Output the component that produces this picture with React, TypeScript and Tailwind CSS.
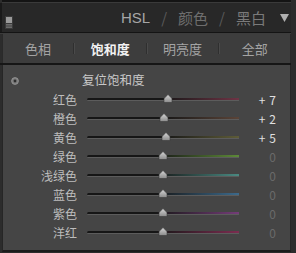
import React from 'react';

const rows = [
  { label: '红色', value: '+7', pos: 168, track: 'bg-[linear-gradient(to_right,#161616_50%,#6e3445)]', bright: true },
  { label: '橙色', value: '+2', pos: 164, track: 'bg-[linear-gradient(to_right,#161616_50%,#5a4438)]', bright: true },
  { label: '黄色', value: '+5', pos: 166, track: 'bg-[linear-gradient(to_right,#161616_50%,#5e5c38)]', bright: true },
  { label: '绿色', value: '0', pos: 163, track: 'bg-[linear-gradient(to_right,#161616_45%,#5d8a38)]', bright: false },
  { label: '浅绿色', value: '0', pos: 163, track: 'bg-[linear-gradient(to_right,#161616_45%,#4a8a82)]', bright: false },
  { label: '蓝色', value: '0', pos: 163, track: 'bg-[linear-gradient(to_right,#161616_45%,#3c6a8c)]', bright: false },
  { label: '紫色', value: '0', pos: 163, track: 'bg-[linear-gradient(to_right,#161616_45%,#743c78)]', bright: false },
  { label: '洋红', value: '0', pos: 163, track: 'bg-[linear-gradient(to_right,#161616_45%,#7c2c50)]', bright: false },
];

const tabs = ['色相', '饱和度', '明亮度', '全部'];

const Thumb: React.FC<{ left: number }> = ({ left }) => (
  <svg
    width="10"
    height="9"
    viewBox="0 0 10 9"
    className="absolute top-[-4px]"
    style={{ left: left - 87 - 5 }}
  >
    <defs>
      <linearGradient id="th" x1="0" y1="0" x2="0" y2="1">
        <stop offset="0" stopColor="#d6d6d6" />
        <stop offset="1" stopColor="#8a8a8a" />
      </linearGradient>
    </defs>
    <path d="M5 0.5 L9 4.5 L9 8.5 L1 8.5 L1 4.5 Z" fill="url(#th)" stroke="#3a3a3a" strokeWidth="0.6" />
  </svg>
);

const App: React.FC = () => {
  return (
    <div
      className="w-[296px] h-[253px] bg-[#2c2c2c] flex flex-col overflow-hidden"
      style={{ fontFamily: '"Noto Sans CJK SC", "Liberation Sans", sans-serif' }}
    >
      {/* top strip */}
      <div className="h-[3px] bg-[#141414] border-b border-[#3a3a3a] mx-[2px] mr-[5px]" />

      {/* header */}
      <div className="h-[29px] bg-[#282828] flex items-center pl-[3px] pr-[2px] mr-[5px] border-l-2 border-[#1a1a1a]">
        <svg width="8" height="13" viewBox="0 0 8 13" className="mt-[10px]">
          <rect x="0" y="0" width="8" height="13" fill="#3a3a3a" />
          <rect x="1" y="1" width="6" height="6" fill="#9a9a9a" />
          <rect x="1" y="8" width="6" height="4" fill="#6a6a6a" />
          <line x1="1" y1="10" x2="7" y2="10" stroke="#444" />
        </svg>
        <div className="flex-1" />
        <div className="flex items-center text-[15px] leading-none">
          <span className="text-[#a6a6a6] font-['Liberation_Sans']">HSL</span>
          <span className="text-[#5a5a5a] mx-[11px]">/</span>
          <span className="text-[#6e6e6e]">颜色</span>
          <span className="text-[#5a5a5a] mx-[11px]">/</span>
          <span className="text-[#7a7a7a]">黑白</span>
          <svg width="9" height="8" viewBox="0 0 9 8" className="ml-[14px]">
            <path d="M0 0 L9 0 L4.5 8 Z" fill="#b0b0b0" />
          </svg>
        </div>
      </div>

      {/* divider */}
      <div className="h-[2px] bg-[#141414] border-b border-[#3c3c3c] mr-[5px]" />

      {/* tabs */}
      <div className="h-[29px] bg-[#3d3d3d] flex items-center mx-[2px] mr-[5px] border-x border-[#2a2a2a] text-[13px]">
        {tabs.map((t, i) => (
          <React.Fragment key={t}>
            {i > 0 && <div className="w-[2px] h-[11px] bg-[#2f2f2f] border-r border-[#4a4a4a]" />}
            <div className={`flex-1 text-center ${i === 1 ? 'text-[#f2f2f2] font-bold' : 'text-[#a4a4a4]'}`}>{t}</div>
          </React.Fragment>
        ))}
      </div>

      <div className="h-[2px] bg-[#161616] mr-[5px]" />

      {/* panel */}
      <div className="flex-1 bg-[#454545] mx-[2px] mr-[5px] border-x border-[#262626] border-b-2 border-b-[#1c1c1c] pt-[6px] relative">
        <div className="h-[19px] flex items-center">
          <div className="w-[74px] pl-[8px]">
            <svg width="8" height="8" viewBox="0 0 8 8">
              <circle cx="4" cy="4" r="3.4" fill="#7a7a7a" stroke="#9a9a9a" strokeWidth="0.8" />
              <circle cx="4" cy="4" r="1.4" fill="#2e2e2e" />
            </svg>
          </div>
          <span className="ml-[5px] text-[12.5px] text-[#c8c8c8] leading-none">复位饱和度</span>
        </div>
        {rows.map((r) => (
          <div key={r.label} className="h-[19px] flex items-center">
            <div className="w-[74px] text-right text-[12px] text-[#bdbdbd] leading-none">{r.label}</div>
            <div className="ml-[10px] w-[152px] h-[4px] relative">
              <div className={`h-[3px] rounded-l-full border-b border-[#5c5c5c] ${r.track}`} />
              <Thumb left={r.pos} />
            </div>
            <div
              className={`w-[37px] text-right text-[12px] leading-none ${r.bright ? 'text-[#e0e0e0]' : 'text-[#6a6a6a]'}`}
            >
              {r.bright ? (
                <>
                  <span className="mr-[4px]">{r.value[0]}</span>
                  {r.value.slice(1)}
                </>
              ) : (
                r.value
              )}
            </div>
          </div>
        ))}
      </div>
      <div className="h-[1px]" />
    </div>
  );
};

export default App;
